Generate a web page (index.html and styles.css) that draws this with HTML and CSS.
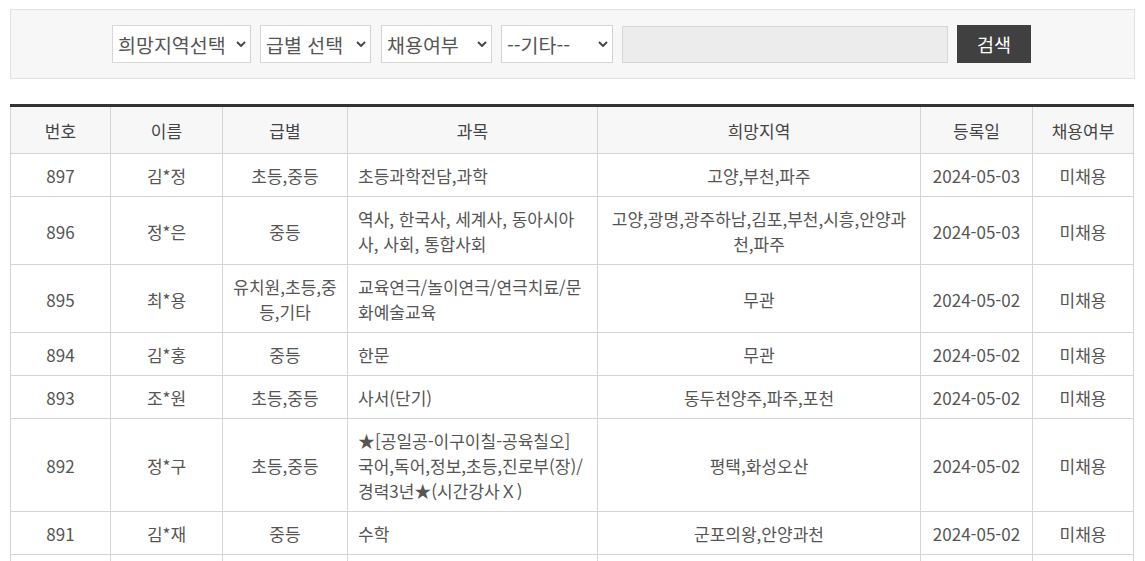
FILE: index.html
```html
<!DOCTYPE html>
<html lang="ko">
<head>
<meta charset="utf-8">
<title>인력풀 목록</title>
<link rel="stylesheet" href="styles.css">
</head>
<body>
<div class="page">
  <form class="search-box">
    <select class="sel sel-area"><option>희망지역선택</option></select>
    <select class="sel sel-grade"><option>급별 선택</option></select>
    <select class="sel sel-hire"><option>채용여부</option></select>
    <select class="sel sel-etc"><option>--기타--</option></select>
    <input class="keyword" type="text">
    <button class="btn-search" type="button">검색</button>
  </form>

  <table class="list">
    <colgroup>
      <col class="c-no"><col class="c-name"><col class="c-grade"><col class="c-subj"><col class="c-area"><col class="c-date"><col class="c-hire">
    </colgroup>
    <thead>
      <tr><th>번호</th><th>이름</th><th>급별</th><th>과목</th><th>희망지역</th><th>등록일</th><th>채용여부</th></tr>
    </thead>
    <tbody>
      <tr><td>897</td><td>김*정</td><td>초등,중등</td><td class="subj">초등과학전담,과학</td><td>고양,부천,파주</td><td>2024-05-03</td><td>미채용</td></tr>
      <tr><td>896</td><td>정*은</td><td>중등</td><td class="subj">역사, 한국사, 세계사, 동아시아사, 사회, 통합사회</td><td>고양,광명,광주하남,김포,부천,시흥,안양과천,파주</td><td>2024-05-03</td><td>미채용</td></tr>
      <tr><td>895</td><td>최*용</td><td>유치원,초등,중등,기타</td><td class="subj">교육연극/놀이연극/연극치료/문화예술교육</td><td>무관</td><td>2024-05-02</td><td>미채용</td></tr>
      <tr><td>894</td><td>김*홍</td><td>중등</td><td class="subj">한문</td><td>무관</td><td>2024-05-02</td><td>미채용</td></tr>
      <tr><td>893</td><td>조*원</td><td>초등,중등</td><td class="subj">사서(단기)</td><td>동두천양주,파주,포천</td><td>2024-05-02</td><td>미채용</td></tr>
      <tr><td>892</td><td>정*구</td><td>초등,중등</td><td class="subj">★[공일공-이구이칠-공육칠오]<br>국어,독어,정보,초등,진로부(장)/<br>경력3년★(시간강사Ｘ)</td><td>평택,화성오산</td><td>2024-05-02</td><td>미채용</td></tr>
      <tr><td>891</td><td>김*재</td><td>중등</td><td class="subj">수학</td><td>군포의왕,안양과천</td><td>2024-05-02</td><td>미채용</td></tr>
      <tr class="next-row"><td></td><td></td><td></td><td></td><td></td><td></td><td></td></tr>
    </tbody>
  </table>
</div>
</body>
</html>
```

FILE: styles.css
```css
html, body {
  margin: 0;
  padding: 0;
  background: #fff;
}

body {
  font-family: "Noto Sans CJK KR", "Noto Sans", sans-serif;
  color: #555;
}

.page {
  padding: 9px 10px 0 10px;
}

.search-box {
  box-sizing: border-box;
  width: 1125px;
  height: 70px;
  margin: 0;
  background: #f7f7f7;
  border: 1px solid #e2e2e2;
  display: flex;
  justify-content: center;
  align-items: center;
  gap: 9px;
  padding-right: 2px;
}

.sel {
  box-sizing: border-box;
  -webkit-appearance: none;
  appearance: none;
  height: 38px;
  margin: 0;
  border: 1px solid #d6d6d6;
  border-radius: 0;
  background-color: #fff;
  background-image: url("data:image/svg+xml;utf8,<svg xmlns='http://www.w3.org/2000/svg' width='10' height='6' viewBox='0 0 10 6'><path d='M1 1 L5 5 L9 1' fill='none' stroke='%23444' stroke-width='1.9'/></svg>");
  background-repeat: no-repeat;
  background-position: right 4px center;
  font-family: "Noto Sans CJK KR", sans-serif;
  font-size: 19.5px;
  color: #555;
  padding: 0 0 0 5px;
}

.sel-area { width: 139px; }
.sel-grade { width: 111px; }
.sel-hire { width: 111px; margin-left: 1px; }
.sel-etc { width: 112px; }

.keyword {
  box-sizing: border-box;
  width: 326px;
  height: 37px;
  border: 1px solid #d6d6d6;
  background: #ececec;
  margin: 0;
  padding: 0 8px;
}

.btn-search {
  box-sizing: border-box;
  width: 74px;
  height: 38px;
  border: 0;
  background: #404040;
  color: #fff;
  font-family: "Noto Sans CJK KR", sans-serif;
  font-size: 18.5px;
  padding: 0;
  margin: 0;
}

.list {
  margin-top: 25px;
  width: 1124px;
  border-collapse: collapse;
  table-layout: fixed;
  border-top: 3px solid #333;
  font-size: 17px;
  line-height: 25px;
}

.c-no { width: 100px; }
.c-name { width: 112px; }
.c-grade { width: 125px; }
.c-subj { width: 250px; }
.c-area { width: 323px; }
.c-date { width: 112px; }
.c-hire { width: 101px; }

.list th,
.list td {
  border: 1px solid #d4d4d4;
  text-align: center;
  vertical-align: middle;
  padding: 9px 10px 8px;
  color: #555;
}

.list th {
  font-weight: normal;
  background: #f7f7f7;
  padding: 11px 10px 10px;
  color: #444;
}

.list td.subj {
  text-align: left;
}

.list .next-row td {
  height: 25px;
}
```
